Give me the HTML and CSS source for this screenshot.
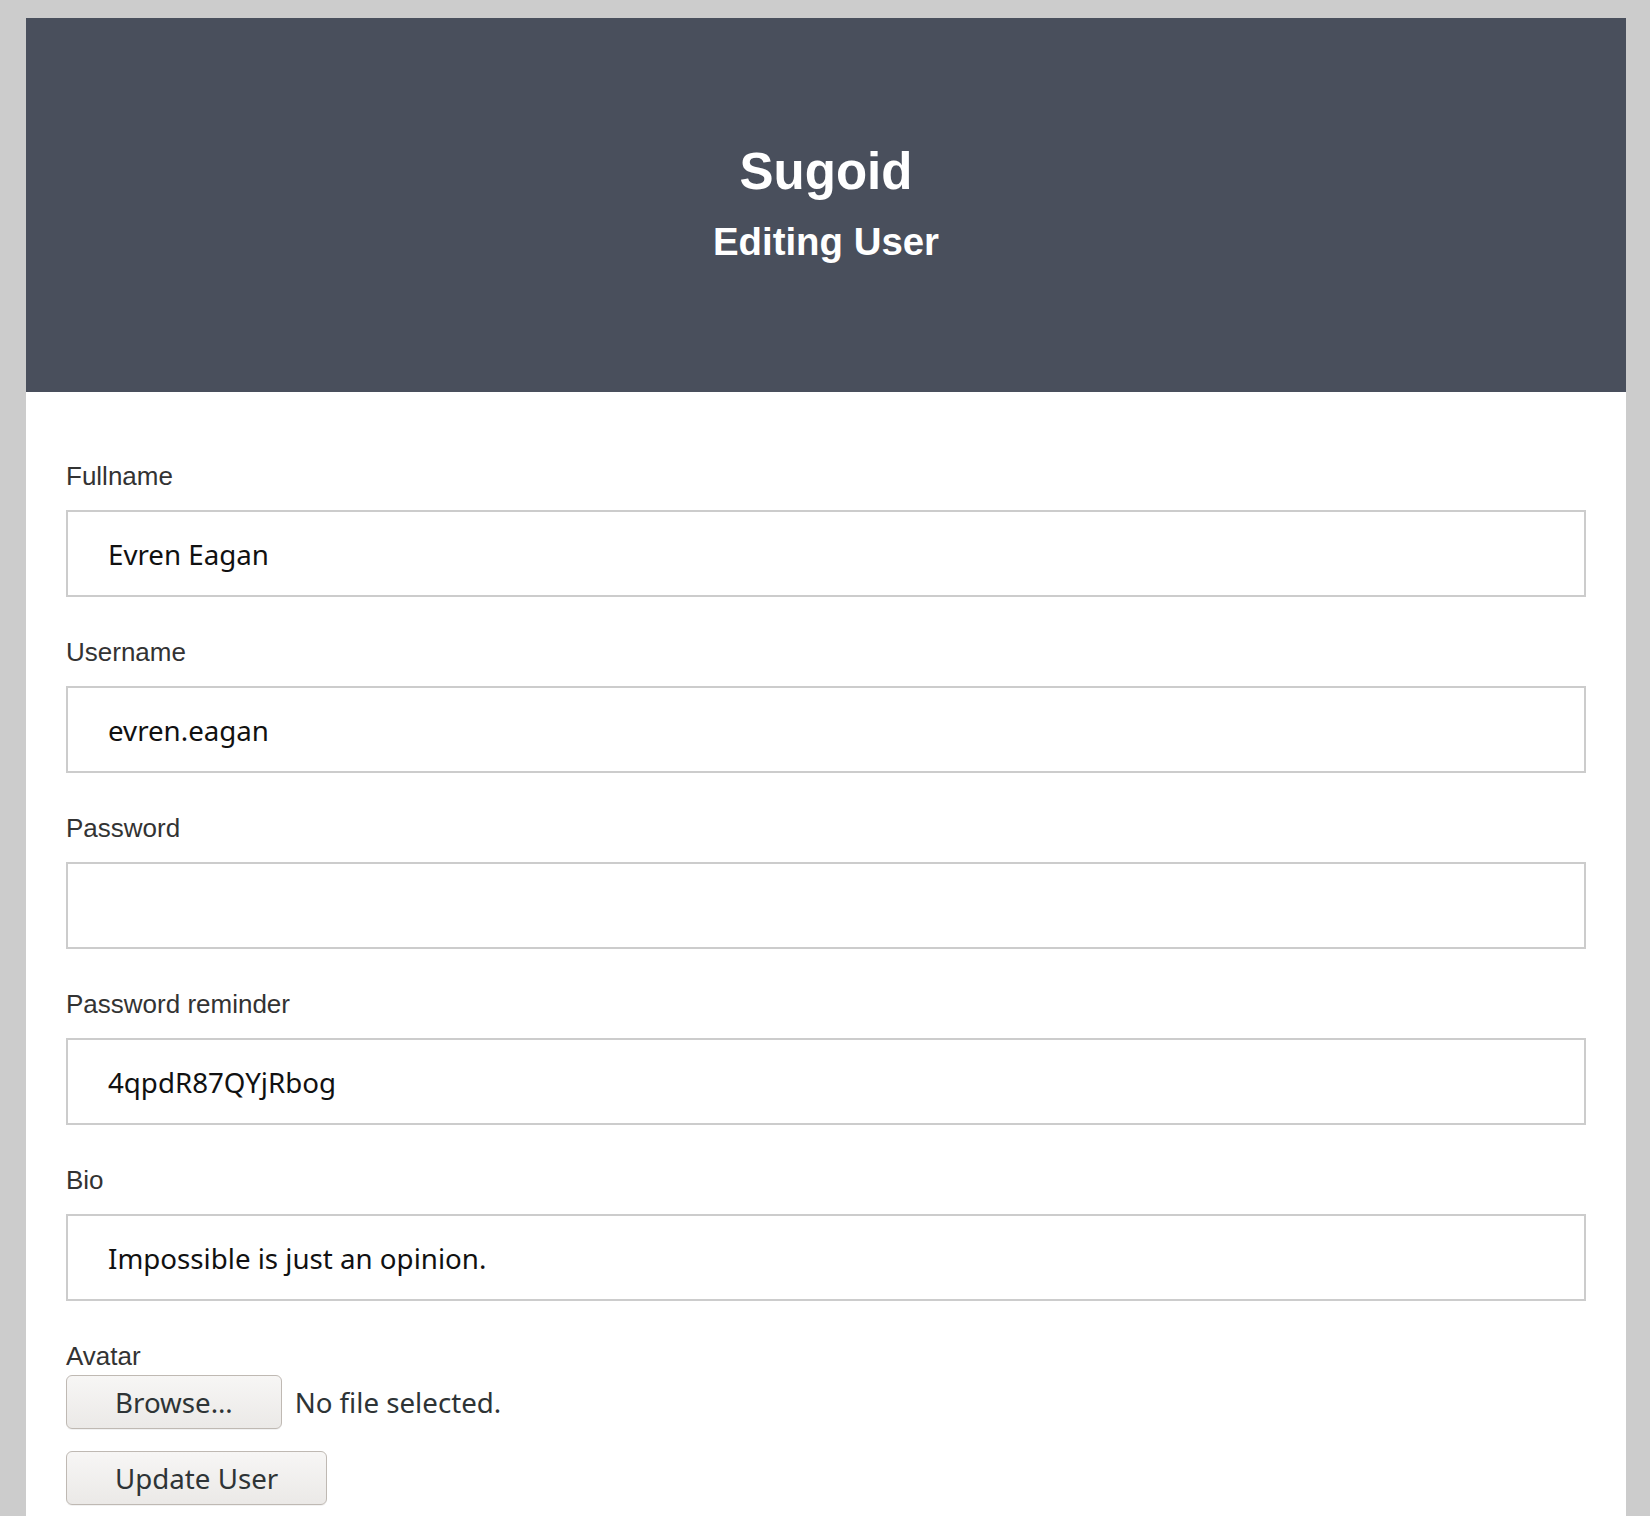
FILE: index.html
```html
<!DOCTYPE html>
<html lang="en">
<head>
<meta charset="utf-8">
<title>Sugoid - Editing User</title>
<link rel="stylesheet" href="styles.css">
</head>
<body>
<div class="page">
  <header class="header">
    <h1 class="brand">Sugoid</h1>
    <h2 class="subtitle">Editing User</h2>
  </header>
  <form class="form">
    <div class="field">
      <label class="label" for="fullname">Fullname</label>
      <input class="text-input" id="fullname" type="text" value="Evren Eagan">
    </div>
    <div class="field">
      <label class="label" for="username">Username</label>
      <input class="text-input" id="username" type="text" value="evren.eagan">
    </div>
    <div class="field">
      <label class="label" for="password">Password</label>
      <input class="text-input" id="password" type="password" value="">
    </div>
    <div class="field">
      <label class="label" for="reminder">Password reminder</label>
      <input class="text-input" id="reminder" type="text" value="4qpdR87QYjRbog">
    </div>
    <div class="field">
      <label class="label" for="bio">Bio</label>
      <input class="text-input" id="bio" type="text" value="Impossible is just an opinion.">
    </div>
    <div class="file-field">
      <label class="label" for="avatar">Avatar</label>
      <div class="file-row">
        <button class="btn" type="button" id="avatar">Browse…</button>
        <span class="file-status">No file selected.</span>
      </div>
    </div>
    <div class="actions">
      <button class="btn" type="submit">Update User</button>
    </div>
  </form>
</div>
</body>
</html>
```
FILE: styles.css
```css
html, body {
  margin: 0;
  padding: 0;
}
body {
  background: #cccccc;
  font-family: "Liberation Sans", Arial, sans-serif;
}
.page {
  width: 1600px;
  margin: 18px 0 0 26px;
  background: #ffffff;
  min-height: 1498px;
}
.header {
  box-sizing: border-box;
  height: 374px;
  padding-top: 124px;
  background: #494f5c;
  color: #ffffff;
  text-align: center;
}
.brand {
  margin: 0;
  font-size: 51px;
  line-height: 60px;
  font-weight: bold;
}
.subtitle {
  margin: 18px 0 0;
  font-size: 38.4px;
  line-height: 44px;
  font-weight: bold;
}
.form {
  padding: 69px 40px 0;
}
.field {
  margin-bottom: 40px;
}
.label {
  display: block;
  font-size: 26px;
  line-height: 30px;
  color: #333333;
}
.text-input {
  display: block;
  box-sizing: border-box;
  width: 100%;
  height: 87px;
  margin: 19px 0 0;
  padding: 0 40px;
  border: 2px solid #cccccc;
  border-radius: 0;
  background: #ffffff;
  font-family: "Noto Sans", "Open Sans", sans-serif;
  font-size: 27.7px;
  color: #111111;
  outline: none;
}
.file-row {
  display: flex;
  align-items: center;
  gap: 13px;
  margin-top: 4px;
}
.btn {
  box-sizing: border-box;
  height: 54px;
  padding: 0 48px;
  border: 1px solid #bfb9b3;
  border-radius: 6px;
  background: linear-gradient(#f7f6f5, #ebe9e7);
  box-shadow: 0 1px 0 rgba(0, 0, 0, 0.05);
  font-family: "Noto Sans", "Open Sans", sans-serif;
  font-size: 27.7px;
  color: #2e3436;
  cursor: pointer;
}
.file-status {
  font-family: "Noto Sans", "Open Sans", sans-serif;
  font-size: 27.7px;
  color: #2e3436;
}
.actions {
  margin-top: 22px;
}
```
